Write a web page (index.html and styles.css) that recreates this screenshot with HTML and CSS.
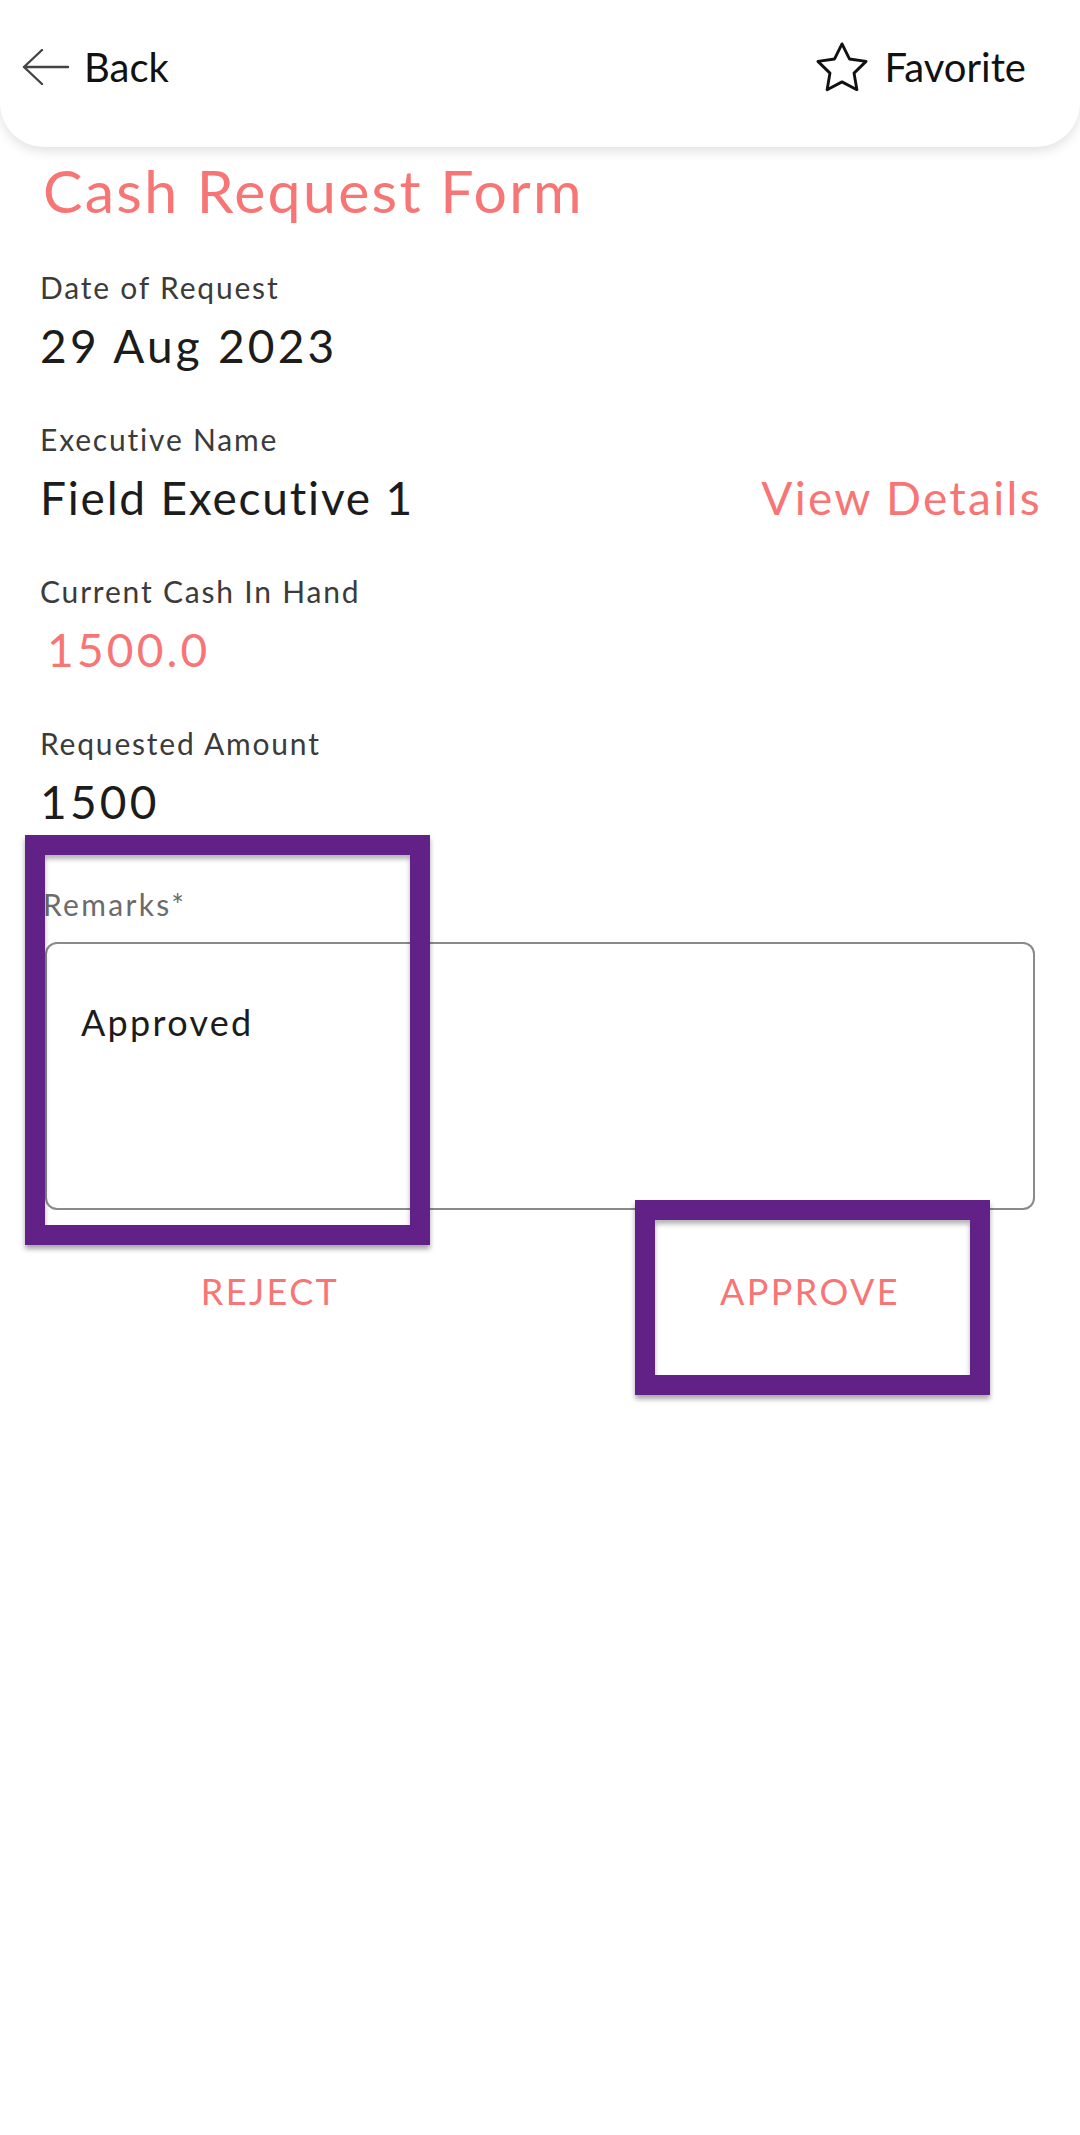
FILE: index.html
```html
<!DOCTYPE html>
<html lang="en">
<head>
<meta charset="utf-8">
<title>Cash Request Form</title>
<link rel="stylesheet" href="styles.css">
</head>
<body>
<div class="page">
  <header class="topbar">
    <div class="nav-item">
      <svg class="back-icon" width="48" height="36" viewBox="0 0 48 36" aria-hidden="true">
        <path d="M46 18 H2 M20 1 L2 18 L20 35" fill="none" stroke="#444" stroke-width="2.4" stroke-linecap="round" stroke-linejoin="round"/>
      </svg>
      <span class="nav-text">Back</span>
    </div>
    <div class="nav-item">
      <svg class="star-icon" width="54" height="52" viewBox="0.8 0.8 22.4 21.6" aria-hidden="true">
        <path d="M12 2l3.09 6.26L22 9.27l-5 4.87 1.18 6.88L12 17.77l-6.18 3.25L7 14.14 2 9.27l6.91-1.01L12 2z" fill="none" stroke="#111" stroke-width="1.2" stroke-linejoin="round"/>
      </svg>
      <span class="nav-text">Favorite</span>
    </div>
  </header>

  <main class="content">
    <h1 class="title">Cash Request Form</h1>

    <div class="field">
      <div class="label">Date of Request</div>
      <div class="value num">29 Aug 2023</div>
    </div>

    <div class="field">
      <div class="label">Executive Name</div>
      <div class="value-row">
        <span class="value name">Field Executive 1</span>
        <span class="value link">View Details</span>
      </div>
    </div>

    <div class="field">
      <div class="label">Current Cash In Hand</div>
      <div class="value accent indent num">1500.0</div>
    </div>

    <div class="field">
      <div class="label">Requested Amount</div>
      <div class="value num">1500</div>
    </div>

    <div class="remarks">
      <div class="remarks-label">Remarks*</div>
      <div class="remarks-box">Approved</div>
    </div>
  </main>

  <div class="actions">
    <div class="action">REJECT</div>
    <div class="action">APPROVE</div>
  </div>

  <div class="highlight highlight-remarks"></div>
  <div class="highlight highlight-approve"></div>
</div>
</body>
</html>
```

FILE: styles.css
```css
* { box-sizing: border-box; }

html, body {
  margin: 0;
  padding: 0;
  background: #ffffff;
}

body {
  font-family: "Lato", "Open Sans", sans-serif;
  color: #1c1c1c;
}

.page {
  position: relative;
  width: 1080px;
  min-height: 2135px;
  background: #ffffff;
}

.topbar {
  height: 147px;
  background: #ffffff;
  border-radius: 0 0 44px 44px;
  box-shadow: 0 4px 12px rgba(0, 0, 0, 0.12);
  display: flex;
  justify-content: space-between;
  align-items: flex-start;
  padding: 43px 54px 0 22px;
}

.nav-item {
  display: flex;
  align-items: center;
  height: 48px;
}

.back-icon { margin-right: 14px; }
.star-icon { margin-right: 15px; }

.nav-text {
  font-size: 40px;
  line-height: 48px;
  color: #111111;
}

.content {
  padding: 0 40px;
}

.title {
  margin: 9px 0 0 3px;
  font-size: 59px;
  line-height: 70px;
  font-weight: 400;
  letter-spacing: 2.3px;
  color: #f87575;
}

.field {
  margin-top: 41px;
}

.field + .field {
  margin-top: 45px;
}

.label {
  font-size: 30px;
  line-height: 40px;
  letter-spacing: 1.8px;
  color: #3b3b3b;
}

.value {
  font-size: 46px;
  line-height: 56px;
  letter-spacing: 2.3px;
  color: #1c1c1c;
}

.value.num {
  letter-spacing: 3.2px;
}

.value.name {
  letter-spacing: 1.8px;
}

.field .label + * {
  margin-top: 11px;
}

.value-row {
  display: flex;
  justify-content: space-between;
  align-items: baseline;
}

.link {
  margin-right: -2px;
}

.link, .accent {
  color: #f87575;
}

.indent {
  padding-left: 7px;
}

.remarks {
  margin-top: 54px;
}

.remarks-label {
  font-size: 30px;
  line-height: 40px;
  letter-spacing: 2.3px;
  color: #6b6b6b;
  padding-left: 3px;
}

.remarks-box {
  margin-top: 18px;
  margin-left: 5px;
  width: 990px;
  height: 268px;
  border: 2px solid #8a8a8a;
  border-radius: 12px;
  padding: 56px 0 0 34px;
  font-size: 36px;
  line-height: 44px;
  letter-spacing: 2.3px;
  color: #1c1c1c;
}

.actions {
  display: flex;
  margin-top: 59px;
}

.action {
  flex: 1;
  text-align: center;
  font-size: 36px;
  line-height: 44px;
  letter-spacing: 2.4px;
  color: #f87575;
}

.highlight {
  position: absolute;
  border: 20px solid #622187;
  box-shadow: 0 4px 5px rgba(0, 0, 0, 0.35), inset 0 4px 5px rgba(0, 0, 0, 0.3);
}

.highlight-remarks {
  left: 25px;
  top: 835px;
  width: 405px;
  height: 410px;
}

.highlight-approve {
  left: 635px;
  top: 1200px;
  width: 355px;
  height: 195px;
}
```
